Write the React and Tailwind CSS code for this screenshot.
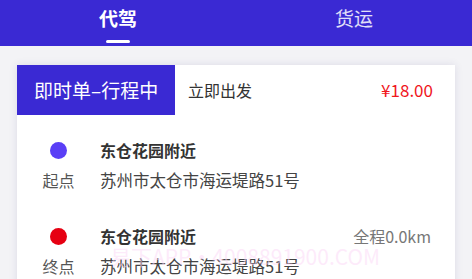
export default function App() {
  const font = { fontFamily: '"Noto Sans CJK SC", "Noto Sans", sans-serif' };
  return (
    <div className="w-[472px] h-[279px] overflow-hidden bg-[#f3f3f6] relative" style={font}>
      <div className="h-[46px] bg-[#3a29d3] flex">
        <div className="flex-1 flex flex-col items-center">
          <div className="text-[19px] leading-[19px] mt-[8px] font-bold text-white">代驾</div>
          <div className="w-[24px] h-[3px] rounded-full bg-white mt-[13px]"></div>
        </div>
        <div className="flex-1 flex flex-col items-center">
          <div className="text-[19px] leading-[19px] mt-[8px] text-white/85">货运</div>
        </div>
      </div>
      <div className="mx-[17px] mt-[19px] bg-white h-[260px] shadow-[0_0_8px_rgba(60,50,120,0.12)]">
        <div className="flex items-center h-[50px]">
          <div className="w-[158px] h-[50px] bg-[#3a29d3] text-white text-[19px] flex items-center pl-[17px]">即时单–行程中</div>
          <div className="ml-[13px] text-[16px] text-[#333]">立即出发</div>
          <div className="ml-auto mr-[22px] text-[17px] text-[#f0161c]">¥18.00</div>
        </div>
        <div className="pt-[20px]">
          <div className="flex">
            <div className="w-[83px] flex flex-col items-center">
              <div className="h-[30px] flex items-center"><div className="w-[17px] h-[17px] rounded-full bg-[#5a3ff6]"></div></div>
              <div className="h-[30px] flex items-center text-[16px] text-[#555]">起点</div>
            </div>
            <div className="flex-1 pr-[24px]">
              <div className="h-[30px] flex items-center text-[16px] font-bold text-[#333]">东仓花园附近</div>
              <div className="h-[30px] flex items-center text-[16.5px] text-[#444]">苏州市太仓市海运堤路51号</div>
            </div>
          </div>
          <div className="flex mt-[26px]">
            <div className="w-[83px] flex flex-col items-center">
              <div className="h-[30px] flex items-center"><div className="w-[17px] h-[17px] rounded-full bg-[#e60012]"></div></div>
              <div className="h-[30px] flex items-center text-[16px] text-[#555]">终点</div>
            </div>
            <div className="flex-1 pr-[24px]">
              <div className="h-[30px] flex items-center justify-between">
                <span className="text-[16px] font-bold text-[#333]">东仓花园附近</span>
                <span className="text-[16px] text-[#777]">全程0.0km</span>
              </div>
              <div className="h-[30px] flex items-center text-[16.5px] text-[#444]">苏州市太仓市海运堤路51号</div>
            </div>
          </div>
        </div>
      </div>
      <div className="absolute left-[110px] top-[247px] text-[21px] leading-[18px] text-[#fbd6f6]/50 whitespace-nowrap pointer-events-none">易下APP・4008891900.COM</div>
    </div>
  );
}
